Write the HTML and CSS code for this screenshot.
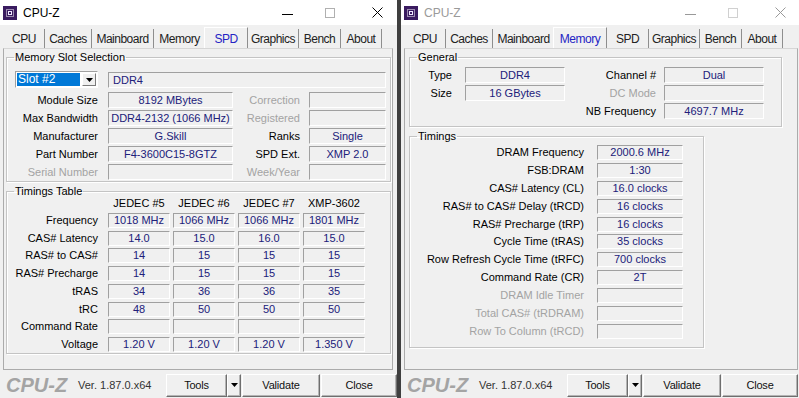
FILE: index.html
```html
<!DOCTYPE html>
<html lang="en">
<head>
    <meta charset="UTF-8">
    <title>CPU-Z</title>
    <link rel="stylesheet" href="styles.css">
</head>
<body>
<div class="desk">
    <!-- SPD window -->
    <div class="win">
        <div class="titlebar">
            <svg class="appicon" width="14" height="14" viewBox="0 0 14 14"><rect width="14" height="14" fill="#3a1b60"/><rect x="3.5" y="3.5" width="7" height="7" fill="none" stroke="#fff" stroke-dasharray="1 1"/><rect x="5.5" y="5.5" width="3" height="3" fill="none" stroke="#f0e8ff"/></svg>
            <span class="wtitle">CPU-Z</span>
            <svg class="ic-min" width="11" height="11" viewBox="0 0 11 11"><path d="M0 6.5H11" stroke="#000"/></svg>
            <svg class="ic-max" width="10" height="10" viewBox="0 0 10 10"><rect x="0.5" y="0.5" width="9" height="9" fill="none" stroke="#b0b0b0"/></svg>
            <svg class="ic-close" width="11" height="11" viewBox="0 0 11 11"><path d="M0.5 0.5L10.5 10.5M10.5 0.5L0.5 10.5" stroke="#000"/></svg>
        </div>
        <div class="tabs">
            <span class="tab w-cpu">CPU</span>
            <span class="tab w-caches">Caches</span>
            <span class="tab w-main">Mainboard</span>
            <span class="tab w-mem">Memory</span>
            <span class="tab w-spd active">SPD</span>
            <span class="tab w-gfx">Graphics</span>
            <span class="tab w-bench">Bench</span>
            <span class="tab w-about">About</span>
        </div>
        <div class="panel">
            <fieldset class="group">
                <legend>Memory Slot Selection</legend>
                <div class="slotgrid">
                    <div class="slotsel"><span class="slotval">Slot #2</span><span class="slotarrow"><svg width="7" height="4" viewBox="0 0 7 4"><path d="M0 0H7L3.5 4Z" fill="#000"/></svg></span></div>
                    <div class="field ddr">DDR4</div>
                    <span class="lbl">Module Size</span><span class="field">8192 MBytes</span><span class="lbl r off">Correction</span><span class="field"></span>
                    <span class="lbl">Max Bandwidth</span><span class="field">DDR4-2132 (1066 MHz)</span><span class="lbl r off">Registered</span><span class="field"></span>
                    <span class="lbl">Manufacturer</span><span class="field">G.Skill</span><span class="lbl r">Ranks</span><span class="field">Single</span>
                    <span class="lbl">Part Number</span><span class="field">F4-3600C15-8GTZ</span><span class="lbl r">SPD Ext.</span><span class="field">XMP 2.0</span>
                    <span class="lbl off">Serial Number</span><span class="field"></span><span class="lbl r off">Week/Year</span><span class="field"></span>
                </div>
            </fieldset>
            <fieldset class="group">
                <legend>Timings Table</legend>
                <div class="tgrid">
                    <span></span><span class="colhead">JEDEC #5</span><span class="colhead">JEDEC #6</span><span class="colhead">JEDEC #7</span><span class="colhead">XMP-3602</span>
                    <span class="lbl">Frequency</span><span class="field">1018 MHz</span><span class="field">1066 MHz</span><span class="field">1066 MHz</span><span class="field">1801 MHz</span>
                    <span class="lbl">CAS# Latency</span><span class="field">14.0</span><span class="field">15.0</span><span class="field">16.0</span><span class="field">15.0</span>
                    <span class="lbl">RAS# to CAS#</span><span class="field">14</span><span class="field">15</span><span class="field">15</span><span class="field">15</span>
                    <span class="lbl">RAS# Precharge</span><span class="field">14</span><span class="field">15</span><span class="field">15</span><span class="field">15</span>
                    <span class="lbl">tRAS</span><span class="field">34</span><span class="field">36</span><span class="field">36</span><span class="field">35</span>
                    <span class="lbl">tRC</span><span class="field">48</span><span class="field">50</span><span class="field">50</span><span class="field">50</span>
                    <span class="lbl">Command Rate</span><span class="field"></span><span class="field"></span><span class="field"></span><span class="field"></span>
                    <span class="lbl">Voltage</span><span class="field">1.20 V</span><span class="field">1.20 V</span><span class="field">1.20 V</span><span class="field">1.350 V</span>
                </div>
            </fieldset>
        </div>
        <div class="bottombar">
            <span class="logo">CPU-Z</span>
            <span class="ver">Ver. 1.87.0.x64</span>
            <span class="btn b-tools">Tools</span>
            <span class="btn b-arrow"><svg width="7" height="4" viewBox="0 0 7 4"><path d="M0 0H7L3.5 4Z" fill="#000"/></svg></span>
            <span class="btn b-validate">Validate</span>
            <span class="btn b-close">Close</span>
        </div>
    </div>

    <!-- Memory window -->
    <div class="win inactive">
        <div class="titlebar">
            <svg class="appicon" width="14" height="14" viewBox="0 0 14 14"><rect width="14" height="14" fill="#3a1b60"/><rect x="3.5" y="3.5" width="7" height="7" fill="none" stroke="#fff" stroke-dasharray="1 1"/><rect x="5.5" y="5.5" width="3" height="3" fill="none" stroke="#f0e8ff"/></svg>
            <span class="wtitle">CPU-Z</span>
            <svg class="ic-min" width="11" height="11" viewBox="0 0 11 11"><path d="M0 6.5H11" stroke="#999"/></svg>
            <svg class="ic-max" width="10" height="10" viewBox="0 0 10 10"><rect x="0.5" y="0.5" width="9" height="9" fill="none" stroke="#d0d0d0"/></svg>
            <svg class="ic-close" width="11" height="11" viewBox="0 0 11 11"><path d="M0.5 0.5L10.5 10.5M10.5 0.5L0.5 10.5" stroke="#999"/></svg>
        </div>
        <div class="tabs">
            <span class="tab w-cpu">CPU</span>
            <span class="tab w-caches">Caches</span>
            <span class="tab w-main">Mainboard</span>
            <span class="tab w-mem active">Memory</span>
            <span class="tab w-spd">SPD</span>
            <span class="tab w-gfx">Graphics</span>
            <span class="tab w-bench">Bench</span>
            <span class="tab w-about">About</span>
        </div>
        <div class="panel">
            <fieldset class="group general">
                <legend>General</legend>
                <div class="ggrid">
                    <span class="lbl">Type</span><span class="field">DDR4</span><span class="lbl">Channel #</span><span class="field">Dual</span>
                    <span class="lbl">Size</span><span class="field">16 GBytes</span><span class="lbl off">DC Mode</span><span class="field"></span>
                    <span></span><span></span><span class="lbl">NB Frequency</span><span class="field">4697.7 MHz</span>
                </div>
            </fieldset>
            <fieldset class="group mtimings">
                <legend>Timings</legend>
                <div class="mgrid">
                    <span class="lbl">DRAM Frequency</span><span class="field">2000.6 MHz</span>
                    <span class="lbl">FSB:DRAM</span><span class="field">1:30</span>
                    <span class="lbl">CAS# Latency (CL)</span><span class="field">16.0 clocks</span>
                    <span class="lbl">RAS# to CAS# Delay (tRCD)</span><span class="field">16 clocks</span>
                    <span class="lbl">RAS# Precharge (tRP)</span><span class="field">16 clocks</span>
                    <span class="lbl">Cycle Time (tRAS)</span><span class="field">35 clocks</span>
                    <span class="lbl">Row Refresh Cycle Time (tRFC)</span><span class="field">700 clocks</span>
                    <span class="lbl">Command Rate (CR)</span><span class="field">2T</span>
                    <span class="lbl off">DRAM Idle Timer</span><span class="field"></span>
                    <span class="lbl off">Total CAS# (tRDRAM)</span><span class="field"></span>
                    <span class="lbl off">Row To Column (tRCD)</span><span class="field"></span>
                </div>
            </fieldset>
        </div>
        <div class="bottombar">
            <span class="logo">CPU-Z</span>
            <span class="ver">Ver. 1.87.0.x64</span>
            <span class="btn b-tools">Tools</span>
            <span class="btn b-arrow"><svg width="7" height="4" viewBox="0 0 7 4"><path d="M0 0H7L3.5 4Z" fill="#000"/></svg></span>
            <span class="btn b-validate">Validate</span>
            <span class="btn b-close">Close</span>
        </div>
    </div>
</div>
</body>
</html>
```

FILE: styles.css
```css
* {
    box-sizing: border-box;
}
html, body {
    margin: 0;
}
body {
    width: 799px;
    height: 398px;
    overflow: hidden;
    background: #3f3f3f;
    font-family: 'Liberation Sans', Arial, sans-serif;
    font-size: 11px;
    color: #000;
}
.desk {
    display: flex;
    gap: 4px;
    height: 398px;
}
.win {
    flex: none;
    width: 397px;
    height: 398px;
    display: flex;
    flex-direction: column;
    background: #f0f0f0;
    overflow: hidden;
}
.win.inactive {
    width: 398px;
}

/* title bar */
.titlebar {
    flex: none;
    height: 25px;
    display: flex;
    align-items: center;
    padding-left: 3px;
    background: #fff;
}
.wtitle {
    margin-left: 6px;
    font-size: 12px;
    color: #000;
}
.inactive .wtitle {
    color: #9a9a9a;
}
.ic-min {
    margin-left: auto;
    margin-top: 1px;
}
.ic-max {
    margin-left: 32px;
}
.ic-close {
    margin-left: 37px;
    margin-right: 14px;
}
.inactive .ic-close {
    margin-right: 13px;
}

/* tabs */
.tabs {
    flex: none;
    height: 23px;
    display: flex;
    align-items: flex-end;
    padding-left: 4px;
}
.tab {
    height: 19px;
    padding-top: 2px;
    line-height: 17px;
    text-align: center;
    font-size: 12px;
    letter-spacing: -0.5px;
    color: #222;
    border-right: 1px solid #8e8e8e;
}
.tab.active {
    position: relative;
    z-index: 1;
    height: 21px;
    padding-top: 1px;
    line-height: 20px;
    margin-left: -2px;
    background: #f0f0f0;
    color: #2424c4;
    border-left: 1px solid #fff;
    border-top: 1px solid #fff;
}
.w-cpu { width: 41px; }
.w-caches { width: 47px; }
.w-main { width: 62px; }
.w-mem { width: 52px; }
.w-spd { width: 42px; }
.w-gfx { width: 51px; }
.w-bench { width: 42px; }
.w-about { width: 41px; }
.w-mem.active { width: 54px; }
.w-spd.active { width: 44px; }

/* tab page */
.panel {
    flex: none;
    height: 322px;
    margin: 0 4px 0 3px;
    padding: 2px 1px 0 2px;
    border: 1px solid #ababab;
    border-top-color: #d6d6d6;
}
.inactive .panel {
    margin-right: 1px;
    padding-left: 4px;
}
.group {
    margin: 0 0 3px 0;
    padding: 0 0 1px 0;
    border: 1px solid #c4c4c4;
    box-shadow: inset 1px 1px 0 #fff, 1px 1px 0 #fff;
    min-width: 0;
}
.group legend {
    margin-left: 7px;
    padding: 0 1px;
    line-height: 13px;
    color: #000;
}
.general {
    width: 373px;
    padding-bottom: 7px;
}
.mtimings {
    width: 295px;
    padding-bottom: 8px;
}

/* fields and labels */
.lbl {
    line-height: 16px;
    text-align: right;
    white-space: nowrap;
}
.lbl.off {
    color: #a3a3a3;
}
.field {
    height: 16px;
    line-height: 14px;
    text-align: center;
    white-space: nowrap;
    color: #20207a;
    background: #f0f0f0;
    border: 1px solid;
    border-color: #a0a0a0 #fff #fff #a0a0a0;
}

/* memory slot selection */
.slotgrid {
    display: grid;
    grid-template-columns: 101px 125px 76px 77px;
    grid-template-rows: 19px repeat(5, 16px);
    row-gap: 2px;
    margin-top: 7px;
}
.slotgrid .lbl {
    padding-right: 10px;
}
.slotgrid .lbl.r {
    padding-right: 9px;
}
.slotsel {
    display: flex;
    width: 83px;
    height: 17px;
    margin-left: 8px;
    padding: 1px;
    background: #fff;
    border: 1px solid;
    border-color: #a0a0a0 #fff #fff #a0a0a0;
}
.slotval {
    flex: 1;
    padding-left: 1px;
    line-height: 13px;
    font-size: 12px;
    color: #fff;
    background: #0078d7;
}
.slotarrow {
    width: 14px;
    margin-left: 2px;
    display: flex;
    align-items: center;
    justify-content: center;
    background: #f0f0f0;
    border: 1px solid;
    border-color: #fff #7a7a7a #7a7a7a #fff;
}
.field.ddr {
    grid-column: 2 / 5;
    margin-top: 1px;
    padding-left: 4px;
    text-align: left;
}

/* timings table */
.tgrid {
    display: grid;
    grid-template-columns: 98px repeat(4, 62px);
    grid-template-rows: 14px repeat(8, 15px);
    column-gap: 3px;
    row-gap: 2.75px;
    margin-top: -2px;
}
.tgrid .lbl {
    line-height: 15px;
    padding-right: 7px;
}
.tgrid .field {
    height: 15px;
    line-height: 13px;
}
.colhead {
    text-align: center;
    line-height: 14px;
}

/* memory tab */
.ggrid {
    display: grid;
    grid-template-columns: 55px 100px 99px 100px;
    grid-template-rows: repeat(3, 16px);
    row-gap: 2px;
    margin-top: 3px;
}
.ggrid .lbl {
    padding-right: 13px;
}
.ggrid .lbl:nth-child(4n+3) {
    padding-right: 8px;
}
.mgrid {
    display: grid;
    grid-template-columns: 187px 86px;
    grid-template-rows: repeat(11, 15px);
    row-gap: 2.9px;
    margin-top: 2px;
}
.mgrid .lbl {
    line-height: 15px;
    padding-right: 13px;
}
.mgrid .field {
    height: 15px;
    line-height: 13px;
}

/* bottom bar */
.bottombar {
    flex: none;
    height: 28px;
    display: flex;
    align-items: center;
    padding-top: 2px;
}
.logo {
    width: 78px;
    padding-left: 6px;
    font-size: 20px;
    font-weight: bold;
    font-style: italic;
    color: #a4a4a4;
}
.ver {
    width: 82px;
    color: #333;
}
.btn {
    height: 23px;
    display: flex;
    align-items: center;
    justify-content: center;
    letter-spacing: -0.2px;
    color: #111;
    background: #f0f0f0;
    border: 1px solid;
    border-color: #fff #6e6e6e #6e6e6e #fff;
    box-shadow: inset -1px -1px 0 #b4b4b4;
}
.b-tools {
    width: 61px;
    margin-left: 6px;
}
.b-arrow {
    width: 14px;
}
.b-validate {
    width: 78px;
    margin-left: 1px;
}
.b-close {
    width: 76px;
    margin-left: 1px;
}
```
